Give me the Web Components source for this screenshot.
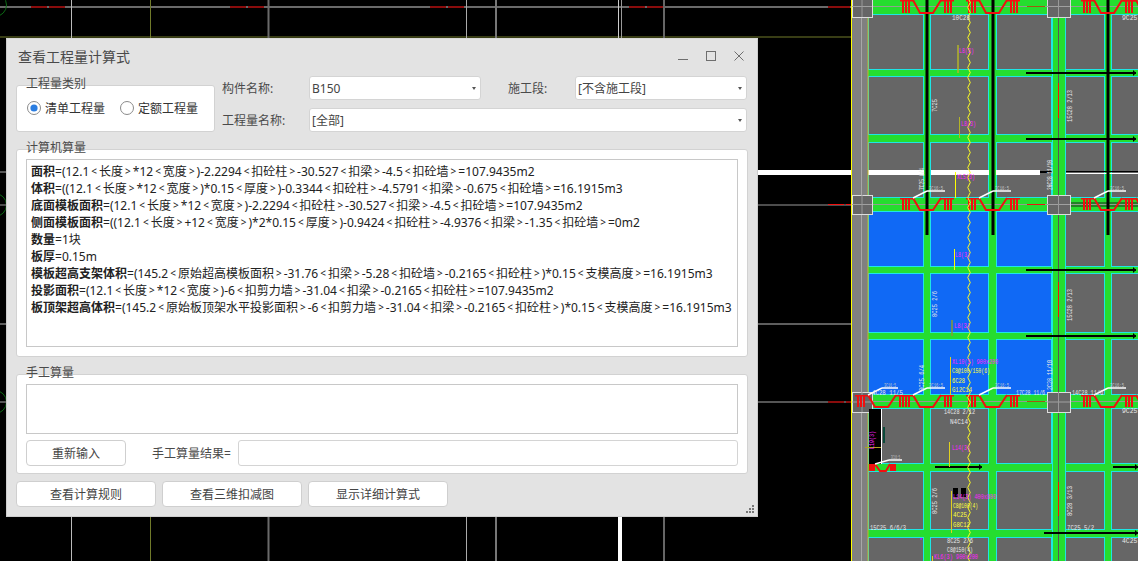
<!DOCTYPE html>
<html lang="zh">
<head>
<meta charset="utf-8">
<title>查看工程量计算式</title>
<style>
  html, body { margin: 0; background: #000; }
  body { font: 12px "Noto Sans", "Noto Sans CJK SC", sans-serif; color: #444; }
</style>
</head>
<body>
<cad-desktop>
  <calc-window title="查看工程量计算式">
    <div style="display:grid;grid-template-columns:206px 87px 172px 94px 172px;grid-template-rows:24px 24px;row-gap:8px;margin-bottom:17px">
      <group-box label="工程量类别" style="grid-row:1/3;margin:9px 7px 0 0;padding:10px 10px 0;display:flex;gap:15px;">
        <radio-option checked>清单工程量</radio-option>
        <radio-option>定额工程量</radio-option>
      </group-box>
      <field-label>构件名称:</field-label>
      <combo-box>B150</combo-box>
      <field-label style="padding-left:27px">施工段:</field-label>
      <combo-box>[不含施工段]</combo-box>
      <field-label>工程量名称:</field-label>
      <combo-box style="grid-column:3/6">[全部]</combo-box>
    </div>

    <group-box label="计算机算量" style="height:208px;padding:9px 9px 9px 9px;margin-bottom:17px">
      <text-pane style="height:100%;padding:3px 0 0 4px">
        <formula-line name="面积">=(12.1&lt;长度&gt;*12&lt;宽度&gt;)-2.2294&lt;扣砼柱&gt;-30.527&lt;扣梁&gt;-4.5&lt;扣砼墙&gt;=107.9435m2</formula-line>
        <formula-line name="体积">=((12.1&lt;长度&gt;*12&lt;宽度&gt;)*0.15&lt;厚度&gt;)-0.3344&lt;扣砼柱&gt;-4.5791&lt;扣梁&gt;-0.675&lt;扣砼墙&gt;=16.1915m3</formula-line>
        <formula-line name="底面模板面积">=(12.1&lt;长度&gt;*12&lt;宽度&gt;)-2.2294&lt;扣砼柱&gt;-30.527&lt;扣梁&gt;-4.5&lt;扣砼墙&gt;=107.9435m2</formula-line>
        <formula-line name="侧面模板面积">=((12.1&lt;长度&gt;+12&lt;宽度&gt;)*2*0.15&lt;厚度&gt;)-0.9424&lt;扣砼柱&gt;-4.9376&lt;扣梁&gt;-1.35&lt;扣砼墙&gt;=0m2</formula-line>
        <formula-line name="数量">=1块</formula-line>
        <formula-line name="板厚">=0.15m</formula-line>
        <formula-line name="模板超高支架体积">=(145.2&lt;原始超高模板面积&gt;-31.76&lt;扣梁&gt;-5.28&lt;扣砼墙&gt;-0.2165&lt;扣砼柱&gt;)*0.15&lt;支模高度&gt;=16.1915m3</formula-line>
        <formula-line name="投影面积">=(12.1&lt;长度&gt;*12&lt;宽度&gt;)-6&lt;扣剪力墙&gt;-31.04&lt;扣梁&gt;-0.2165&lt;扣砼柱&gt;=107.9435m2</formula-line>
        <formula-line name="板顶架超高体积">=(145.2&lt;原始板顶架水平投影面积&gt;-6&lt;扣剪力墙&gt;-31.04&lt;扣梁&gt;-0.2165&lt;扣砼柱&gt;)*0.15&lt;支模高度&gt;=16.1915m3</formula-line>
      </text-pane>
    </group-box>

    <group-box label="手工算量" style="height:100px;padding:9px 9px 0 9px;margin-bottom:7px">
      <text-pane style="height:50px"></text-pane>
      <div style="display:flex;align-items:center;margin-top:6px">
        <push-button style="width:100px;height:26px">重新输入</push-button>
        <field-label style="margin-left:26px;width:86px;height:26px">手工算量结果=</field-label>
        <combo-box plain style="flex:1;height:26px"></combo-box>
      </div>
    </group-box>

    <div style="display:flex;gap:6px">
      <push-button style="width:140px;height:26px">查看计算规则</push-button>
      <push-button style="width:140px;height:26px">查看三维扣减图</push-button>
      <push-button style="width:140px;height:26px">显示详细计算式</push-button>
    </div>
  </calc-window>
</cad-desktop>

<script>
// Small form parts of the dialog
class FieldLabel extends HTMLElement {
  constructor() {
    super();
    this.attachShadow({ mode: 'open' });
    this.shadowRoot.innerHTML = `
      <style>:host { display: flex; align-items: center; color: #4a4a4a; white-space: nowrap; }</style>
      <slot></slot>`;
  }
}
customElements.define('field-label', FieldLabel);

class ComboBox extends HTMLElement {
  constructor() {
    super();
    this.attachShadow({ mode: 'open' });
    // the "plain" variant is a line edit: same box, no arrow
    const arrow = this.hasAttribute('plain') ? '' : '<i></i>';
    this.shadowRoot.innerHTML = `
      <style>
        :host { display: flex; align-items: center; box-sizing: border-box; background: #fff;
                border: 1px solid #d4d4d4; border-radius: 3px; padding: 0 4px 0 2px; color: #444; }
        span { flex: 1; }
        i { border: 2.5px solid transparent; border-top: 3px solid #555; border-bottom: 0; }
      </style>
      <span><slot></slot></span>${arrow}`;
  }
}
customElements.define('combo-box', ComboBox);

class RadioOption extends HTMLElement {
  constructor() {
    super();
    this.attachShadow({ mode: 'open' });
    const dot = this.hasAttribute('checked') ? '<circle cx="7" cy="7" r="3.6" fill="#2a7de1"/>' : '';
    this.shadowRoot.innerHTML = `
      <style>
        :host { display: inline-flex; align-items: center; gap: 4px; height: 24px; color: #333; white-space: nowrap; }
        svg { display: block; }
      </style>
      <svg width="14" height="14" viewBox="0 0 14 14">
        <circle cx="7" cy="7" r="6.5" fill="#fff" stroke="#8a8a8a"/>${dot}
      </svg>
      <slot></slot>`;
  }
}
customElements.define('radio-option', RadioOption);

class PushButton extends HTMLElement {
  constructor() {
    super();
    this.attachShadow({ mode: 'open' });
    this.shadowRoot.innerHTML = `
      <style>
        :host { display: flex; align-items: center; justify-content: center; box-sizing: border-box; background: #fff;
                border: 1px solid #cfcfcf; border-radius: 4px; color: #444; }
      </style>
      <slot></slot>`;
  }
}
customElements.define('push-button', PushButton);

class GroupBox extends HTMLElement {
  constructor() {
    super();
    this.attachShadow({ mode: 'open' });
    this.shadowRoot.innerHTML = `
      <style>
        :host { display: block; position: relative; box-sizing: border-box; background: #fff;
                border: 1px solid #d2d2d2; border-radius: 3px; }
        /* legend sits across the top border */
        .legend { position: absolute; left: 9px; top: -11px; line-height: 18px; color: #4a4a4a; white-space: nowrap; }
      </style>
      <div class="legend">${this.getAttribute('label') || ''}</div>
      <slot></slot>`;
  }
}
customElements.define('group-box', GroupBox);

class TextPane extends HTMLElement {
  constructor() {
    super();
    this.attachShadow({ mode: 'open' });
    this.shadowRoot.innerHTML = `
      <style>:host { display: block; box-sizing: border-box; background: #fff; border: 1px solid #c8c8c8; overflow: hidden; }</style>
      <slot></slot>`;
  }
}
customElements.define('text-pane', TextPane);

class FormulaLine extends HTMLElement {
  constructor() {
    super();
    this.attachShadow({ mode: 'open' });
    this.shadowRoot.innerHTML = `
      <style>
        :host { display: block; height: 17px; line-height: 17px; color: #222; white-space: nowrap; }
        b { font-weight: 700; }
        /* the angle brackets are small and loosely set in the original */
        ::slotted(.br) { font-size: 10px; padding: 0 2px; vertical-align: 1px; }
      </style>
      <b>${this.getAttribute('name')}</b><slot></slot>`;
  }

  connectedCallback() {
    // Wrap each < and > so the slotted rule above can space them
    const parts = this.textContent.split(/([<>])/);
    this.textContent = '';
    for (const part of parts) {
      if (part === '<' || part === '>') {
        const span = document.createElement('span');
        span.className = 'br';
        span.textContent = part;
        this.append(span);
      } else if (part) {
        this.append(part);
      }
    }
  }
}
customElements.define('formula-line', FormulaLine);

// The floating dialog, with title bar and resize grip
class CalcWindow extends HTMLElement {
  constructor() {
    super();
    this.attachShadow({ mode: 'open' });
    const grip = [[6,0],[3,3],[6,3],[0,6],[3,6],[6,6]]
      .map(([x, y]) => `<rect x="${x}" y="${y}" width="2" height="2"/>`).join('');
    this.shadowRoot.innerHTML = `
      <style>
        :host { position: absolute; left: 6px; top: 38px; width: 752px; height: 479px; box-sizing: border-box;
                display: flex; flex-direction: column; background: #e3e3e3; border: 1px solid #cdcdcd; border-top-color: #d8d8d8;
                font: 12px "Noto Sans", "Noto Sans CJK SC", sans-serif; }
        header { height: 37px; flex: none; display: flex; align-items: center; padding: 0 13px 4px 11px; box-sizing: border-box; }
        h1 { flex: 1; margin: 0; font-size: 14px; font-weight: 400; color: #4a4a4a; }
        header svg { display: block; margin-left: 18px; stroke: #6e6e6e; fill: none; }
        main { padding: 0 9px; }
        .grip { position: absolute; right: 3px; bottom: 3px; fill: #777; }
      </style>
      <header>
        <h1>${this.getAttribute('title')}</h1>
        <svg width="10" height="10" viewBox="0 0 10 10"><path d="M0 8.5h10"/></svg>
        <svg width="10" height="10" viewBox="0 0 10 10"><rect x=".5" y=".5" width="9" height="9"/></svg>
        <svg width="10" height="10" viewBox="0 0 10 10"><path d="M.5 .5l9 9M9.5 .5l-9 9"/></svg>
      </header>
      <main><slot></slot></main>
      <svg class="grip" width="8" height="8" viewBox="0 0 8 8">${grip}</svg>`;
  }
}
customElements.define('calc-window', CalcWindow);

// The drawing behind the dialog: plain black model space on the left, floor plan on the right
class CadDesktop extends HTMLElement {
  constructor() {
    super();
    this.attachShadow({ mode: 'open' });
    this.shadowRoot.innerHTML = `
      <style>
        :host { display: block; position: relative; width: 1138px; height: 561px; overflow: hidden; background: #000; }
        svg { display: block; }
        text { font-family: "Liberation Mono", monospace; font-size: 8px; }
      </style>
      ${this.drawing()}
      <slot></slot>`;
  }

  drawing() {
    const GREEN = '#25dd2f', CYAN = '#1ee5e5', SLAB = '#666', BLUE = '#1069f5', RED = '#f01010';
    const out = [];
    const rect = (x, y, w, h, c, extra = '') => out.push(`<rect x="${x}" y="${y}" width="${w}" height="${h}" fill="${c}" ${extra}/>`);
    const line = (x1, y1, x2, y2, c, w = 1) => out.push(`<line x1="${x1}" y1="${y1}" x2="${x2}" y2="${y2}" stroke="${c}" stroke-width="${w}"/>`);
    const text = (s, x, y, len, c) => out.push(`<text x="${x}" y="${y}" fill="${c}" textLength="${len}" lengthAdjust="spacingAndGlyphs">${s}</text>`);
    const vtext = (s, x, y, len, c) => out.push(`<text transform="translate(${x} ${y}) rotate(-90)" fill="${c}" textLength="${len}" lengthAdjust="spacingAndGlyphs">${s}</text>`);

    // left part: grid lines on black
    for (const [y, c, w] of [[7, '#6a6a6a', 2], [37, '#707a2a', 1], [172, '#aaa', 1], [205, '#999', 1], [324, '#bbb', 1], [402, '#555', 2]]) line(0, y, 851, y, c, w);
    rect(758, 170, 93, 5, '#fff');
    for (const [x, c, w] of [[71.5, '#bbb', 1], [150.5, '#707a2a', 1], [268.5, '#6a6a6a', 2], [466.5, '#aaa', 1], [496, '#777', 2], [664, '#666', 2]]) line(x, 0, x, 561, c, w);
    // this grid line reads as a close pair above the dialog, as one thick line below it
    line(618.5, 0, 618.5, 38, '#ccc'); line(621.5, 0, 621.5, 38, '#999');
    rect(618, 517, 4, 44, '#fff');
    for (const x of [31, 230, 430, 629, 828]) { rect(x, 6, x === 828 ? 22 : 16, 2, '#8a0c0c'); if (x !== 828) rect(x + 18, 6, 16, 2, '#8a0c0c'); }
    rect(828, 204, 16, 1, RED); rect(846, 204, 5, 1, RED);
    rect(828, 401, 16, 2, '#8a0c0c'); rect(846, 401, 5, 2, '#8a0c0c');
    out.push('<circle cx="-5" cy="205" r="11.5" fill="none" stroke="#0c6a14"/><circle cx="-5" cy="402" r="11.5" fill="none" stroke="#0c6a14"/><circle cx="-5" cy="5" r="11.5" fill="none" stroke="#0c6a14"/>');

    // plan: slabs, beams and their outlines
    rect(851, 0, 287, 561, '#000');
    const cols = [[868, 924], [930, 989], [996, 1052], [1065, 1105], [1111, 1150]];
    const rows = [[14, 70], [76, 135], [142, 198], [211, 267], [273, 333], [339, 395], [408, 464], [471, 530], [537, 570]];
    rect(868, 0, 270, 561, GREEN);
    rows.forEach(([y1, y2], r) => cols.forEach(([x1, x2], c) => {
      const blue = c < 3 && r >= 3 && r <= 5;
      rect(x1 + .5, y1 + .5, x2 - x1 - 1, y2 - y1 - 1, blue ? BLUE : SLAB, `stroke="${CYAN}" stroke-width="1"`);
    }));
    // white band through the third bay
    rect(868, 170, 56, 5, '#fff'); rect(931, 170, 58, 5, '#fff'); rect(996, 170, 44, 5, '#fff');
    rect(1066, 171, 72, 1, '#000'); rect(1066, 173, 72, 1, '#fff'); rect(1040, 171, 12, 2, '#000');
    // centre lines
    rect(1052.5, 0, 13, 561, GREEN);
    line(1052.5, 0, 1052.5, 561, CYAN); line(1065.5, 0, 1065.5, 561, CYAN);
    line(1058.5, 0, 1058.5, 561, '#555', 1);
    line(868, 204.5, 1138, 204.5, '#8fa08f'); line(868, 6.5, 1138, 6.5, '#8fa08f'); line(868, 401.5, 1138, 401.5, '#8fa08f');
    line(1071, 203, 1138, 203, '#222'); line(1071, 206, 1138, 206, '#222');
    rect(1027, 6, 18, 1, '#a05a10'); rect(1027, 204, 18, 1, RED); rect(1027, 401, 18, 1, '#a05a10');

    // black bars inside the beams
    for (const x of [925.5, 991.5, 1106.5]) { rect(x, 0, 3, 235, '#000'); }
    for (const [y, x1, x2] of [[73, 1026, 1136], [139, 1026, 1136], [270, 1026, 1136], [336, 1026, 1136], [467, 935, 982], [467, 1113, 1138], [533, 1044, 1138]]) {
      rect(x1, y - 1, x2 - x1, 2, '#000');
      out.push(`<path d="M${x2 - 3} ${y - 3}l3 3-3 3z" fill="#000"/>`);
    }
    for (const [y1, y2] of [[83, 118], [282, 317], [482, 516]]) rect(1058, y1, 1, y2 - y1, RED);

    // left edge strip
    rect(852, 0, 16, 561, '#808080');
    line(851.5, 0, 851.5, 561, '#ffff00'); line(868, 0, 868, 561, '#c4b828');
    line(861.5, 0, 861.5, 561, '#a8a8a8');

    // columns
    for (const [x, y, w, h] of [[852, -4, 20, 21], [1047, -4, 23, 21], [852, 195, 20, 19], [1047, 195, 23, 19], [852, 392, 20, 20], [1047, 392, 23, 20]]) {
      rect(x + .5, y + .5, w, h, '#666', 'stroke="#ddd" stroke-width="1"');
      line(x, y + h / 2, x + w, y + h / 2, '#a0a0a0'); line(x + w / 2, y, x + w / 2, y + h, '#999');
    }

    // top-slung bars: ticks + trapezoid
    const truss = (x, y, h) => {
      for (const dx of [2, 5, 8, 44, 47, 50]) rect(x + dx, y, 2, h, RED);
      line(x, y + .75, x + 14, y + .75, RED, 1.5); line(x + 40, y + .75, x + 54, y + .75, RED, 1.5);
      out.push(`<path d="M${x + 13} ${y}L${x + 20} ${y + h}H${x + 33}L${x + 41} ${y}" fill="none" stroke="${RED}" stroke-width="2"/>`);
    };
    for (const x of [900, 966, 1081, 1123]) { truss(x, 0, 13); truss(x, 198, 12); truss(x, 395, 12); }
    truss(855, 395, 12);
    // stub at the stair
    for (const dx of [0, 2, 4, 21, 23, 25]) rect(869 + dx, 464, 2, 7, RED);
    out.push(`<path d="M875 464L880 471H886L890 464" fill="none" stroke="${RED}" stroke-width="2"/>`);

    // black stair opening
    rect(869, 409, 13, 55, '#000'); rect(881, 409, 1, 55, '#fff'); rect(883, 427, 2, 16, '#0b4a3a');
    rect(865, 447, 16, 1, '#b0a020');
    rect(953, 488, 5, 9, '#000'); rect(961, 488, 5, 9, '#000');

    // white leader lines with their small annotations
    const leader = (x1, y, x2, base) => {
      line(x1, base, x1 + 14, y, '#fff', 1.5); line(x1 + 14, y, x2, y, '#fff', 1.5);
      out.push(`<text x="${x1 + 16}" y="${y - 1}" fill="#c8c8c8" style="font-size:6px" textLength="${x2 - x1 - 18}" lengthAdjust="spacingAndGlyphs">3C16:5</text>`);
    };
    for (const x of [913, 979, 1094]) { leader(x, 191, x + 32, 198); leader(x, 388, x + 32, 395); }
    leader(868, 388, 898, 395);
    leader(875, 460, 902, 464);

    // wavy section line
    let wave = 'M969 0';
    for (let y = 0; y < 561; y += 5) wave += `Q${y % 10 ? 966.5 : 971.5} ${y + 2.5} 969 ${y + 5}`;
    out.push(`<path d="${wave}" fill="none" stroke="#ffff20" stroke-width="1"/>`);

    // span marks next to the beam names
    for (const [x, y1, y2, c, w] of [[958, 45, 73, '#b4b428', 1.5], [959.5, 117, 138, '#b4b428', 1], [955.5, 172, 198, '#ffff00', 1], [954.5, 249, 270, '#ffff00', 1], [952, 320, 336, '#8a9a30', 1.5], [950.5, 357, 395, '#e0d020', 1], [949.5, 442, 467, '#e0d020', 1], [951.5, 491, 533, '#e0d020', 1], [932.5, 556, 561, '#e0d020', 1]]) line(x, y1, x, y2, c, w);

    // annotations
    const W = '#e8e8e8', M = '#ff20ff', Y = '#ffff40';
    [['10C28', 952, 20, 18], ['4C28 11/5', 872, 395, 31], ['17C28 11/6', 1016, 395, 29], ['14C28 11/6', 1072, 395, 31], ['14C28 2/12', 944, 414, 31], ['N4C14', 950, 424, 18], ['15C25 6/6/3', 870, 530, 36], ['7C25 5/2', 1067, 530, 27], ['8C25 2/6', 947, 543, 26], ['C8@150(4)', 947, 552, 26]]
      .forEach(([s, x, y, l]) => text(s, x, y, l, W));
    // names at the right edge: a smaller size so they stay inside the picture
    [['4C25', 1122, 543], ['9C25', 1122, 413], ['9C25', 1122, 20]]
      .forEach(([s, x, y]) => out.push(`<text x="${x}" y="${y}" fill="${W}" style="font-size:6.4px">${s}</text>`));
    [['7C25', 937, 112, 13], ['15C28 2/13', 1072, 122, 32], ['7C25 6/4', 924, 190, 22], ['20C28 11/10', 1052, 190, 30], ['8C25 2/6', 937, 317, 26], ['15C28 2/13', 1072, 321, 32], ['8C25 6/4', 924, 391, 26], ['2C28 11/10', 1052, 390, 30], ['8C25 2/6', 937, 514, 26], ['8C28 3/13', 1072, 516, 30]]
      .forEach(([s, x, y, l]) => vtext(s, x, y, l, W));
    [['L8(3)', 959, 53, 15], ['L8(3)', 961, 126, 15], ['XL5(3)', 957, 179, 18], ['L8(3)', 955, 257, 15], ['L8(3)', 954, 328, 16], ['XL10(3) 900x200', 952, 364, 46], ['L14(3)', 952, 450, 18], ['L14(3) 400x800', 953, 499, 43], ['KL6(3) 900x200', 934, 559, 44]]
      .forEach(([s, x, y, l]) => text(s, x, y, l, M));
    vtext('L19(3)', 874, 449, 18, M);
    [['C8@100/150(6)', 952, 373, 38], ['6C28', 952, 383, 13], ['G12C14', 952, 392, 20], ['C8@100(4)', 953, 508, 25], ['4C25', 953, 517, 14], ['G8C12', 953, 527, 17]]
      .forEach(([s, x, y, l]) => text(s, x, y, l, Y));
    rect(920, 538, 2, 2, '#a020f0');

    return `<svg width="1138" height="561" viewBox="0 0 1138 561">${out.join('')}</svg>`;
  }
}
customElements.define('cad-desktop', CadDesktop);
</script>
</body>
</html>
